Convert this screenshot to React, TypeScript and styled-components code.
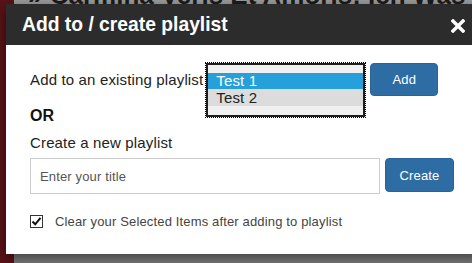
import React from "react";
import styled, { createGlobalStyle } from "styled-components";

const Global = createGlobalStyle`
  html, body { margin: 0; padding: 0; }
  body { font-family: "Liberation Sans", Arial, sans-serif; }
`;

const Page = styled.div`
  position: relative;
  width: 472px;
  height: 263px;
  overflow: hidden;
  display: flex;
  background: #7b7b7b;
`;

const SideBar = styled.div`
  width: 14px;
  flex: none;
  background: #5a1216;
`;

const Main = styled.div`
  flex: 1;
  display: flex;
  flex-direction: column;
`;

const PageHeader = styled.div`
  height: 40px;
  background: #9d9d9d;
  overflow: hidden;
`;

const PageTitle = styled.h1`
  margin: -18px 0 0 14px;
  font-size: 26px;
  line-height: 26px;
  font-weight: bold;
  color: #1c1c1c;
  white-space: nowrap;
`;

const Modal = styled.div`
  position: absolute;
  left: 6px;
  top: 4px;
  width: 475px;
  height: 250px;
  background: #fff;
  box-shadow: 0 4px 12px rgba(0, 0, 0, 0.5);
  display: flex;
  flex-direction: column;
`;

const Header = styled.div`
  height: 41px;
  flex: none;
  background: #2c2c2c;
  display: flex;
  align-items: center;
  justify-content: space-between;
  padding: 0 16px;
  box-sizing: border-box;
`;

const Title = styled.h2`
  margin: 0;
  font-size: 19.3px;
  font-weight: bold;
  color: #fff;
  line-height: 24px;
`;

const Close = styled.button`
  border: 0;
  background: none;
  padding: 0;
  width: 14px;
  height: 14px;
  display: flex;
  margin-top: 2px;
`;

const Body = styled.div`
  padding: 18px 0 0 24px;
  display: flex;
  flex-direction: column;
  letter-spacing: 0.15px;
`;

const Row = styled.div`
  display: flex;
  align-items: flex-start;
  position: relative;
`;

const Label = styled.div<{ $line?: number; $size?: number }>`
  font-size: ${(p) => p.$size ?? 15}px;
  line-height: ${(p) => p.$line ?? 17}px;
  color: #222;
`;

const SelectSlot = styled.div`
  position: relative;
  width: 159px;
  height: 33px;
  margin-left: 3px;
`;

const ListBox = styled.div`
  position: absolute;
  left: 0;
  top: 0;
  width: 159px;
  height: 54px;
  box-sizing: border-box;
  border: 2px solid #1e1e1e;
  outline: 1px dotted #000;
  outline-offset: 0;
  background: #f0f0f0;
  padding-top: 8px;
`;

const Option = styled.div<{ $selected?: boolean }>`
  height: ${(p) => (p.$selected ? 16 : 17)}px;
  line-height: ${(p) => (p.$selected ? 16 : 17)}px;
  padding-left: 8px;
  font-size: 15px;
  color: ${(p) => (p.$selected ? "#fff" : "#222")};
  background: ${(p) => (p.$selected ? "#26a0da" : "#dcdcdc")};
`;

const Button = styled.button<{ $w: number; $h: number }>`
  width: ${(p) => p.$w}px;
  height: ${(p) => p.$h}px;
  margin-left: 5px;
  border: 1px solid #2a6496;
  border-radius: 4px;
  background: #2e6da4;
  color: #fff;
  font-family: "Liberation Sans", Arial, sans-serif;
  font-size: 13px;
  letter-spacing: 0.15px;
  padding: 0;
`;

const Or = styled.div`
  margin-top: 11px;
  font-size: 16px;
  line-height: 18px;
  font-weight: bold;
  color: #111;
`;

const SubHead = styled(Label)`
  margin-top: 9px;
`;

const InputRow = styled(Row)`
  margin-top: 7px;
`;

const TitleInput = styled.input`
  width: 350px;
  height: 36px;
  box-sizing: border-box;
  border: 1px solid #ccc;
  padding: 0 9px;
  font-family: "Liberation Sans", Arial, sans-serif;
  font-size: 13px;
  letter-spacing: 0.15px;
  color: #555;
  &::placeholder { color: #555; }
`;

const CheckRow = styled.label`
  margin-top: 20px;
  display: flex;
  align-items: center;
  font-size: 13px;
  color: #444;
`;

const CheckBox = styled.span`
  width: 13px;
  height: 13px;
  box-sizing: border-box;
  border: 1px solid #333;
  background: #fff;
  display: flex;
  align-items: center;
  justify-content: center;
  margin-right: 12px;
`;

export default function App() {
  return (
    <>
      <Global />
      <Page>
        <SideBar />
        <Main>
          <PageHeader>
            <PageTitle>» Carmina Veris Et Amoris: Ich Was Ein Chind So Wolgetan</PageTitle>
          </PageHeader>
        </Main>
        <Modal>
          <Header>
            <Title>Add to / create playlist</Title>
            <Close aria-label="Close">
              <svg width="14" height="14" viewBox="0 0 14 14">
                <path d="M2 2 L12 12 M12 2 L2 12" stroke="#fff" strokeWidth="3.4" strokeLinecap="square" />
              </svg>
            </Close>
          </Header>
          <Body>
            <Row>
              <Label $line={33}>Add to an existing playlist</Label>
              <SelectSlot>
                <ListBox>
                  <Option $selected>Test 1</Option>
                  <Option>Test 2</Option>
                </ListBox>
              </SelectSlot>
              <Button $w={68} $h={33}>Add</Button>
            </Row>
            <Or>OR</Or>
            <SubHead>Create a new playlist</SubHead>
            <InputRow>
              <TitleInput placeholder="Enter your title" />
              <Button $w={69} $h={34}>Create</Button>
            </InputRow>
            <CheckRow>
              <CheckBox>
                <svg width="11" height="11" viewBox="0 0 11 11">
                  <path d="M1.5 5.5 L4.2 8.3 L9.5 1.8" stroke="#111" strokeWidth="2" fill="none" />
                </svg>
              </CheckBox>
              Clear your Selected Items after adding to playlist
            </CheckRow>
          </Body>
        </Modal>
      </Page>
    </>
  );
}
